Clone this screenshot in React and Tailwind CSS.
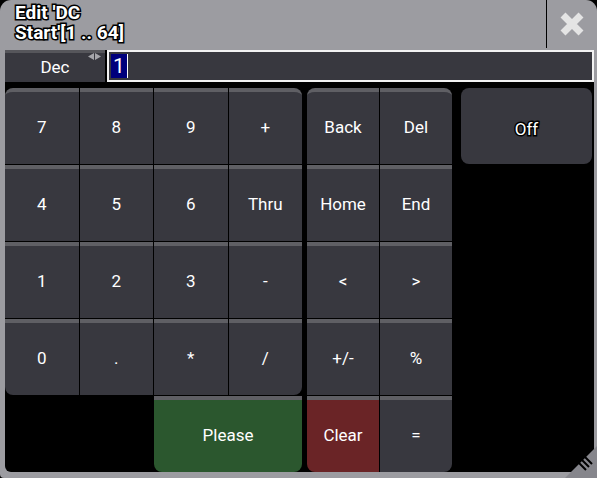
import React from 'react'

const KEYS_LEFT = [
    ['7', '8', '9', '+'],
    ['4', '5', '6', 'Thru'],
    ['1', '2', '3', '-'],
    ['0', '.', '*', '/'],
]

const KEYS_RIGHT = [
    ['Back', 'Del'],
    ['Home', 'End'],
    ['<', '>'],
    ['+/-', '%'],
]

// rounded corners per position in a block
function cornerClass(row, col, lastRow, lastCol) {
    const c = []
    if (row === 0 && col === 0) c.push('rounded-tl-[8px]')
    if (row === 0 && col === lastCol) c.push('rounded-tr-[8px]')
    if (row === lastRow && col === 0) c.push('rounded-bl-[8px]')
    if (row === lastRow && col === lastCol) c.push('rounded-br-[8px]')
    return c.join(' ')
}

function Key({ label, className = '', bg = 'bg-[#38383f]' }) {
    return (
        <div className={`${bg} border-t-4 border-[#5f5f64] flex items-center justify-center text-white text-[17px] ${className}`}>
            {label}
        </div>
    )
}

export default function App() {
    return (
        <div className="w-[597px] h-[478px] bg-black font-['Roboto',sans-serif]">
            <div className="relative w-full h-full bg-[#9c9ca1] rounded-t-[11px] rounded-b-[4px] flex flex-col">
                {/* title bar */}
                <div className="h-[48px] flex">
                    <div className="flex-1 pl-[15px] pt-[3px] text-white font-bold text-[19px] leading-[20px] [-webkit-text-stroke:3px_#000] [paint-order:stroke_fill]">
                        <div>Edit 'DC</div>
                        <div>Start'[1 .. 64]</div>
                    </div>
                    <div className="w-[51px] border-l border-black flex items-center justify-center">
                        <svg width="24" height="24" viewBox="0 0 24 24">
                            <path d="M3 3 L21 21 M21 3 L3 21" stroke="#e4e4e4" strokeWidth="7" />
                        </svg>
                    </div>
                </div>

                {/* body */}
                <div className="mt-[2px] ml-[5px] mr-[3px] mb-[6px] flex-1 bg-black rounded-bl-[6px] flex flex-col gap-[6px]">
                    <div className="h-[32px] flex gap-[2px]">
                        <div className="relative w-[100px] bg-[#38383f] border-t-[3px] border-[#56565b] flex items-center justify-center text-white text-[17px]">
                            Dec
                            <svg className="absolute right-[4px] top-[0px]" width="13" height="7" viewBox="0 0 13 7">
                                <path d="M6 0 L6 7 L0 3.5 Z M7 0 L7 7 L13 3.5 Z" fill="#a5a5aa" />
                            </svg>
                        </div>
                        <div className="flex-1 border-2 border-[#f2f2f2] bg-[#38383f] flex items-center pl-[2px]">
                            <span className="bg-[#00007c] text-white text-[21px] leading-[24px] px-[2px]">1</span>
                            <span className="w-[1px] h-[24px] bg-white"></span>
                        </div>
                    </div>

                    <div className="flex-1 flex">
                        {/* numeric block */}
                        <div className="w-[297px] grid grid-cols-4 grid-rows-5 gap-px">
                            {KEYS_LEFT.map((row, r) =>
                                row.map((k, c) => (
                                    <Key key={k} label={k} className={cornerClass(r, c, 3, 3)} />
                                ))
                            )}
                            <div></div>
                            <div></div>
                            <Key label="Please" bg="bg-[#2b572e]" className="col-span-2 rounded-b-[8px]" />
                        </div>

                        {/* edit block */}
                        <div className="ml-[5px] w-[145px] grid grid-cols-2 grid-rows-5 gap-px">
                            {KEYS_RIGHT.map((row, r) =>
                                row.map((k, c) => (
                                    <Key key={k} label={k} className={cornerClass(r, c, 4, 1)} />
                                ))
                            )}
                            <Key label="Clear" bg="bg-[#6a2426]" className="rounded-bl-[8px]" />
                            <Key label="=" className="rounded-br-[8px]" />
                        </div>

                        <div className="ml-[9px] mr-[2px] flex-1">
                            <div className="h-[76px] bg-[#38383f] rounded-[8px] flex items-center justify-center pt-[8px] text-white text-[17px] [-webkit-text-stroke:3px_#000] [paint-order:stroke_fill]">
                                Off
                            </div>
                        </div>
                    </div>
                </div>

                {/* resize grip */}
                <svg className="absolute right-0 bottom-0" width="32" height="32" viewBox="0 0 32 32">
                    <path d="M32 0 L32 32 L0 32 Z" fill="#86868c" />
                    <path d="M14 17 L21 24 M17 14 L24 21 M20 11 L27 18" stroke="#000" strokeWidth="2" />
                </svg>
            </div>
        </div>
    )
}
